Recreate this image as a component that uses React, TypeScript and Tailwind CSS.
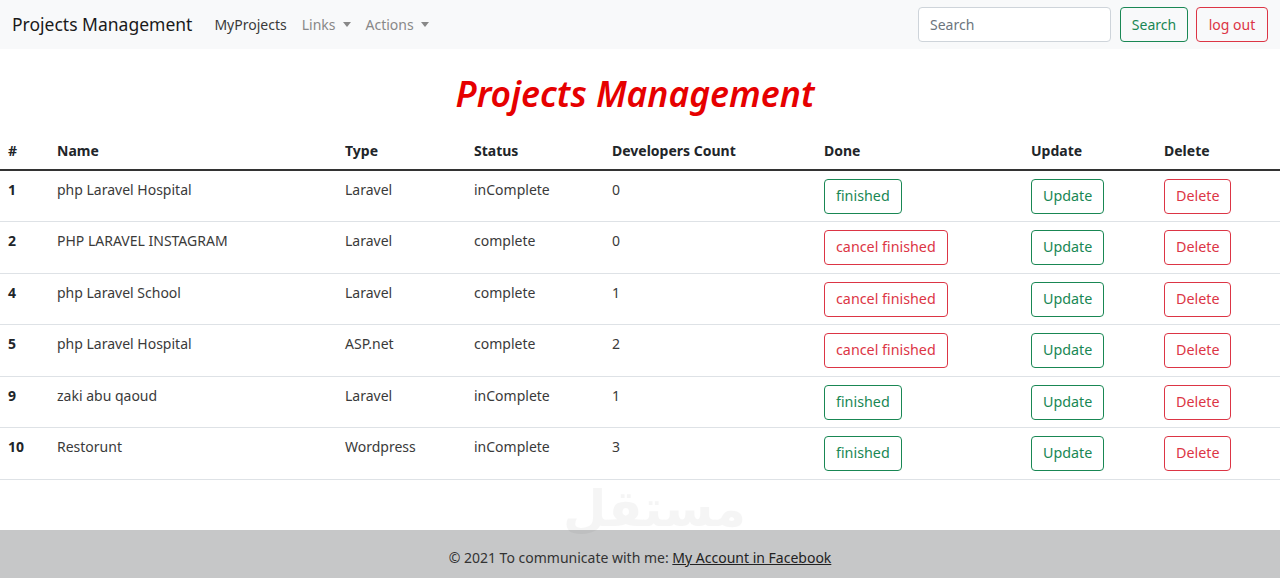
import React from "react";

const projects = [
  { id: 1, name: "php Laravel Hospital", type: "Laravel", status: "inComplete", devs: 0 },
  { id: 2, name: "PHP LARAVEL INSTAGRAM", type: "Laravel", status: "complete", devs: 0 },
  { id: 4, name: "php Laravel School", type: "Laravel", status: "complete", devs: 1 },
  { id: 5, name: "php Laravel Hospital", type: "ASP.net", status: "complete", devs: 2 },
  { id: 9, name: "zaki abu qaoud", type: "Laravel", status: "inComplete", devs: 1 },
  { id: 10, name: "Restorunt", type: "Wordpress", status: "inComplete", devs: 3 },
];

function Caret() {
  return <span className="ml-[7px] inline-block w-0 h-0 border-x-[4.5px] border-x-transparent border-t-[5px] border-t-current align-middle" />;
}

function OutlineBtn({ color, children }: { color: "green" | "red"; children: React.ReactNode }) {
  const cls =
    color === "green"
      ? "border-[#198754] text-[#198754]"
      : "border-[#dc3545] text-[#dc3545]";
  return (
    <button className={`h-[35px] px-[11px] rounded-[4px] border bg-white text-[14.3px] leading-none ${cls}`}>
      {children}
    </button>
  );
}

export default function App() {
  return (
    <div className="min-h-[578px] flex flex-col bg-white text-[#212529] font-['Noto_Sans',sans-serif] relative">
      {/* Navbar */}
      <nav className="h-[49px] bg-[#f8f9fa] flex items-center px-[12px]">
        <span className="text-[17.5px] text-[#1a1a1a] mr-[22px]">Projects Management</span>
        <ul className="flex items-center gap-[15px] text-[14px]">
          <li className="text-[#3a3a3a]">MyProjects</li>
          <li className="text-[#888] flex items-center">Links<Caret /></li>
          <li className="text-[#888] flex items-center">Actions<Caret /></li>
        </ul>
        <div className="ml-auto flex items-center gap-[8px]">
          <input
            placeholder="Search"
            className="w-[193px] h-[35px] px-[11px] rounded-[4px] border border-[#ced4da] bg-white text-[14px] placeholder:text-[#6c757d] outline-none mr-[1px]"
          />
          <button className="h-[35px] w-[68px] rounded-[4px] border border-[#198754] text-[#198754] text-[14px]">Search</button>
          <button className="h-[35px] w-[72px] rounded-[4px] border border-[#dc3545] text-[#dc3545] text-[14px]">log out</button>
        </div>
      </nav>

      {/* Title */}
      <h1 className="mt-[24px] mb-[16px] pr-[10px] text-center text-[35.5px] leading-[40px] font-semibold italic text-[#e60000]">
        Projects Management
      </h1>

      {/* Table */}
      <table className="w-full border-collapse text-[14px] mb-[50px]">
        <colgroup>
          <col className="w-[49px]" />
          <col className="w-[288px]" />
          <col className="w-[129px]" />
          <col className="w-[138px]" />
          <col className="w-[212px]" />
          <col className="w-[207px]" />
          <col className="w-[133px]" />
          <col />
        </colgroup>
        <thead>
          <tr className="border-b-2 border-[#333] text-left">
            {["#", "Name", "Type", "Status", "Developers Count", "Done", "Update", "Delete"].map((h) => (
              <th key={h} className="px-[8px] pt-[10px] pb-[6px] leading-[24px] font-bold">{h}</th>
            ))}
          </tr>
        </thead>
        <tbody>
          {projects.map((p) => (
            <tr key={p.id} className="border-b border-[#dee2e6] align-top">
              <td className="px-[8px] pt-[7px] h-[51.5px] leading-[24px] font-bold">{p.id}</td>
              <td className="px-[8px] pt-[7px] leading-[24px] text-[#3a3a3a]">{p.name}</td>
              <td className="px-[8px] pt-[7px] leading-[24px] text-[#3a3a3a]">{p.type}</td>
              <td className="px-[8px] pt-[7px] leading-[24px] text-[#3a3a3a]">{p.status}</td>
              <td className="px-[8px] pt-[7px] leading-[24px] text-[#3a3a3a]">{p.devs}</td>
              <td className="px-[8px] pt-[8px]">
                {p.status === "complete" ? (
                  <OutlineBtn color="red">cancel finished</OutlineBtn>
                ) : (
                  <OutlineBtn color="green">finished</OutlineBtn>
                )}
              </td>
              <td className="px-[8px] pt-[8px]">
                <OutlineBtn color="green">Update</OutlineBtn>
              </td>
              <td className="px-[8px] pt-[8px]">
                <OutlineBtn color="red">Delete</OutlineBtn>
              </td>
            </tr>
          ))}
        </tbody>
      </table>

      {/* Footer */}
      <footer className="mt-auto h-[48px] bg-[#c6c7c8] flex items-center justify-center pt-[6px] text-[14px] text-[#333]">
        <span>
          © 2021 To communicate with me: <a className="underline text-[#222]">My Account in Facebook</a>
        </span>
      </footer>

      {/* watermark */}
      <div className="absolute left-[563px] top-[484px] text-[50px] font-bold leading-none text-[#000] opacity-[0.035] font-['DejaVu_Sans',sans-serif] pointer-events-none select-none">
        مستقل
      </div>
    </div>
  );
}
